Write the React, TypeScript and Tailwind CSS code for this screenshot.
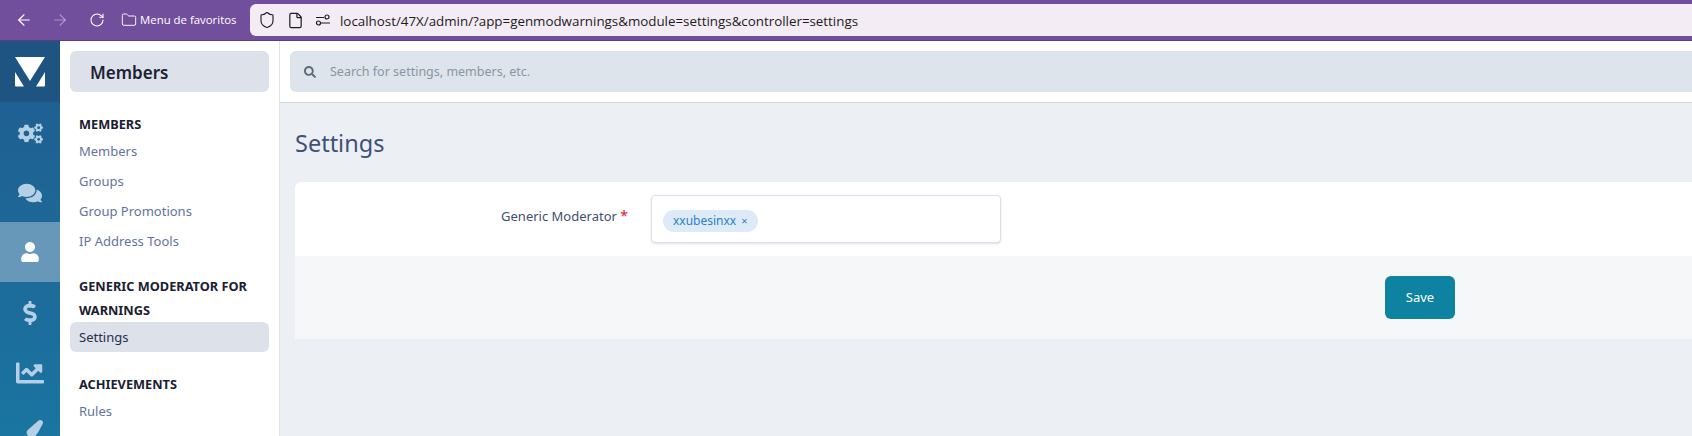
import { ArrowLeft, ArrowRight, RotateCw, Folder, Shield, File } from 'lucide-react';
import { FaCogs, FaComments, FaUser, FaDollarSign, FaChartLine, FaPaintBrush, FaSearch } from 'react-icons/fa';

const railItems = [
  { icon: FaCogs, size: 25 },
  { icon: FaComments, size: 24 },
  { icon: FaUser, size: 20, active: true },
  { icon: FaDollarSign, size: 24 },
  { icon: FaChartLine, size: 28 },
  { icon: FaPaintBrush, size: 26 },
];

function Logo() {
  return (
    <svg width="30" height="30" viewBox="0 0 30 30" fill="white">
      <path d="M0 0H30L15 24Z" />
      <path d="M0 15L9 29.5H1Q0 29.5 0 28.5Z" />
      <path d="M30 15L21 29.5H29Q30 29.5 30 28.5Z" />
    </svg>
  );
}

function BrowserBar() {
  return (
    <div className="h-[41px] shrink-0 bg-[#714f9d] border-b border-[#5a3a80] flex items-start pt-1 font-['Open_Sans',sans-serif]">
      <div className="w-[250px] h-8 flex items-center pl-[15px] text-white">
        <ArrowLeft size={18} strokeWidth={1.5} />
        <ArrowRight size={18} strokeWidth={1.5} className="ml-[18px] text-white/40" />
        <RotateCw size={16} strokeWidth={1.6} className="ml-5" />
        <Folder size={16} strokeWidth={1.4} className="ml-4" />
        <span className="ml-[3px] text-[11.4px] whitespace-nowrap">Menu de favoritos</span>
      </div>
      <div className="flex-1 h-8 bg-[#f3ecf5] rounded-l-md flex items-center pl-[8px] text-[#1c1b22]">
        <Shield size={18} strokeWidth={1.5} />
        <File size={17} strokeWidth={1.7} className="ml-[11px]" />
        <svg width="16" height="16" viewBox="0 0 16 16" fill="none" stroke="currentColor" strokeWidth="1.2" className="ml-[11px]">
          <path d="M1 5.5H9M6 11H15" />
          <circle cx="12" cy="5" r="2" />
          <circle cx="3.5" cy="11" r="2" />
        </svg>
        <span className="ml-[9px] pt-[2px] text-[13.35px] whitespace-nowrap">localhost/47X/admin/?app=genmodwarnings&amp;module=settings&amp;controller=settings</span>
      </div>
    </div>
  );
}

function NavSection({ title, items, active, className }: { title: string; items: string[]; active?: string; className?: string }) {
  return (
    <div className={className}>
      <h3 className="px-[9px] text-[12.75px] leading-6 font-bold text-[#1a2030]">{title}</h3>
      <ul>
        {items.map((item) => (
          <li
            key={item}
            className={
              item === active
                ? 'h-[30px] px-[9px] pt-[2px] flex items-center rounded-md text-[13px] bg-[#dde1ea] text-[#27304a]'
                : 'h-[30px] px-[9px] pt-[2px] flex items-center rounded-md text-[13px] text-[#64739f]'
            }
          >
            {item}
          </li>
        ))}
      </ul>
    </div>
  );
}

export default function App() {
  return (
    <div className="h-[436px] w-[1692px] overflow-hidden flex flex-col bg-white font-['Noto_Sans',sans-serif]">
      <BrowserBar />
      <div className="flex-1 min-h-0 flex">
        <aside className="w-[60px] shrink-0 bg-gradient-to-b from-[#1f5c8f] to-[#1a75a1]">
          <div className="h-[61px] bg-[#1e5482] flex items-center justify-center">
            <Logo />
          </div>
          {railItems.map(({ icon: Icon, size, active }, i) => (
            <div
              key={i}
              className={
                active
                  ? 'h-[60px] flex items-center justify-center bg-[#6797b9] text-white'
                  : 'h-[60px] flex items-center justify-center pt-[2px] text-[#b4d0e4]'
              }
            >
              <Icon size={size} />
            </div>
          ))}
        </aside>

        <nav className="w-[220px] shrink-0 border-r border-[#dfe3ea] px-[10px] pt-[10px]">
          <div className="h-[41px] mb-5 pl-5 pt-[2px] flex items-center rounded-md bg-[#dde1ea] text-[17px] font-semibold text-[#1a2234]">
            Members
          </div>
          <NavSection className="mb-[18px]" title="MEMBERS" items={['Members', 'Groups', 'Group Promotions', 'IP Address Tools']} />
          <NavSection className="mb-5" title="GENERIC MODERATOR FOR WARNINGS" items={['Settings']} active="Settings" />
          <NavSection title="ACHIEVEMENTS" items={['Rules', 'Badges']} />
        </nav>

        <main className="flex-1 min-w-0 bg-[#ecf0f5]">
          <div className="h-[62px] bg-white border-b border-[#d3d8dc] pt-[10px] pl-[10px]">
            <div className="h-[41px] bg-[#dde4ec] rounded-l-md flex items-center pl-[14px] text-[12.5px] text-[#8b95a1]">
              <FaSearch size={12} className="text-[#5f6b78]" />
              <span className="ml-[14px] pt-[2px]">Search for settings, members, etc.</span>
            </div>
          </div>

          <h1 className="pl-[15px] pt-[23px] h-[79px] text-[23.5px] leading-[34px] text-[#3f5079]">Settings</h1>

          <section className="ml-[15px] rounded-tl-md overflow-hidden">
            <div className="h-[74px] bg-white flex pt-[13px]">
              <label className="w-[343px] pr-[10px] pt-3 text-right text-[13px] leading-[18px] text-[#3f4f6f]">
                Generic Moderator <span className="text-[#d3222a] text-[14px]">*</span>
              </label>
              <div className="ml-[13px] w-[350px] h-[48px] bg-white border border-[#dcdfee] rounded shadow-sm pl-[11px] pt-[11px]">
                <span className="inline-flex items-center h-[22px] w-[95px] pl-[10px] rounded-full bg-[#dcebf7] text-[12px] text-[#2d7fc9]">
                  xxubesinxx<span className="ml-[5px] text-[11px]">×</span>
                </span>
              </div>
            </div>
            <div className="h-[83px] bg-[#f6f7f9] pt-[20px] pl-[1090px]">
              <button className="w-[70px] h-[43px] rounded-md bg-[#0d83a1] text-white text-[13px]">Save</button>
            </div>
          </section>
        </main>
      </div>
    </div>
  );
}
